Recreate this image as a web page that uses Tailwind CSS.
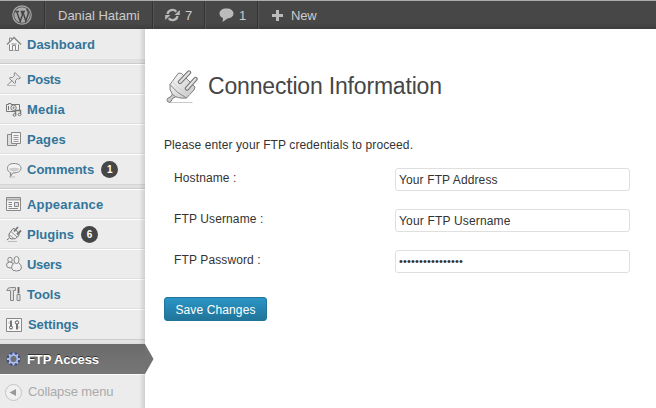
<!DOCTYPE html>
<html lang="en">
<head>
<meta charset="utf-8">
<title>Connection Information</title>
<script src="https://cdn.jsdelivr.net/npm/@tailwindcss/browser@4"></script>
</head>
<body class="h-[408px] w-[656px] overflow-hidden bg-white font-['Liberation_Sans',Arial,sans-serif] text-[#333]">
<header class="flex h-[29px] items-stretch border-t border-[#a9aeaa] bg-linear-to-b from-[#474747] from-80% to-[#3d3d3d] text-[13px] text-[#ccc]">
  <div class="flex w-[45px] items-center border-r border-[#333] pl-3">
    <svg class="size-5" viewBox="0 0 20 20" fill="none" stroke="#aaa"><circle cx="10" cy="10" r="9.200" stroke-width="1.200"/><circle cx="10" cy="10" r="7.800" fill="#a8a8a8" stroke="none"/><path d="M3.200 6.500H7M8.600 6.500H13M4.700 6.500L8.200 16.500L10.500 9.500L9.400 6.500M10.800 6.500L13.800 16L16.300 8.800Q16.500 6 14.900 5Q15 3.500 16 4.500" stroke="#444" stroke-width="1.400"/></svg>
  </div>
  <div class="flex w-[108px] items-center border-r border-l border-r-[#333] border-l-[#555] pt-px pl-3"><span>Danial Hatami</span></div>
  <div class="flex w-[52px] items-center gap-[5px] border-r border-l border-r-[#333] border-l-[#555] pl-[11px]">
    <svg class="h-[14px] w-[15px]" viewBox="0 0 15 14" fill="none" stroke="#b8b8b8" stroke-width="2.300"><path d="M2.500 6A5 5 0 0 1 11.300 3.700M12.500 8A5 5 0 0 1 3.700 10.300"/><path d="M14.800 2V7H9.500ZM.2 12V7H5.500Z" fill="#b8b8b8" stroke="none"/></svg>
    <span class="pt-px">7</span>
  </div>
  <div class="flex w-[53px] items-center gap-[5px] border-r border-l border-r-[#333] border-l-[#555] pl-[13px]">
    <svg class="h-[14px] w-[15px]" viewBox="0 0 15 14" fill="#bbb"><path d="M7.500.5C12 .5 14.500 2.600 14.500 5.500S12 10.300 8.500 10.500L3.500 14L4 10Q.5 8.500 .5 5.500C.5 2.600 3 .5 7.500 .5Z"/></svg>
    <span class="pt-px">1</span>
  </div>
  <div class="flex items-center gap-2 border-l border-[#555] pl-[13px]">
    <svg class="size-[11px]" viewBox="0 0 11 11"><path d="M5.500 0V11M0 5.500H11" stroke="#bbb" stroke-width="3"/></svg>
    <span class="pt-px tracking-[-0.2px]">New</span>
  </div>
</header>
<div class="flex h-[379px]">
  <nav class="relative w-[145px] shrink-0 bg-[#ececec] text-[13px] font-bold text-[#32759b]">
    <a class="flex h-[31px] items-center gap-[5px] border-b border-[#dfdfdf] pl-1.5">
      <svg class="size-4" viewBox="0 0 16 16" fill="#f5f5f5" stroke="#888"><path d="M3.500 7V14.500H12.500V7"/><path d="M1 8.500L8 1.500L15 8.500" stroke-width="1.500"/><path d="M3.500 5V2H5.500V3.500M6.500 14.500V9.500H9.500V14.500M5.500 8H10.500"/></svg><span class="pt-px">Dashboard</span></a>
    <div class="h-1 border-b border-[#ccc] bg-[#e0e0e0]"></div>
    <a class="flex h-[30px] items-center gap-[5px] border-t border-b border-t-white border-b-[#dfdfdf] pl-1.5">
      <svg class="size-4" viewBox="0 0 16 16" fill="#e5e5e5" stroke="#888"><path d="M1 14.500H10" stroke="#bbb"/><path d="M6 9.500L1.500 14M9 1.500L14.500 7L12.500 8L11.500 7.500L9.500 9.500V12L8.500 12.500L3.500 7.500L4 6.500L6.500 6.500L8.500 4.500L8 3Z"/></svg><span class="pt-px tracking-[-0.35px]">Posts</span></a>
    <a class="flex h-[30px] items-center gap-[5px] border-t border-b border-t-white border-b-[#dfdfdf] pl-1.5">
      <svg class="size-4" viewBox="0 0 16 16" fill="#eee" stroke="#777"><path d="M.5 3.500H2.500V2.500H5V3.500H13.500V10.500H.5Z"/><circle cx="7.500" cy="6.800" r="2.700"/><circle cx="7.500" cy="6.800" r=".7"/><path d="M2.500 5V9"/><path d="M9.500 14V9.500H14.500V13.500" stroke-width="1.500"/><ellipse cx="8.500" cy="14" rx="1.500" ry="1.200"/><ellipse cx="13.500" cy="13.500" rx="1.500" ry="1.200"/></svg><span class="pt-px tracking-[0.25px]">Media</span></a>
    <a class="flex h-[30px] items-center gap-[5px] border-t border-b border-t-white border-b-[#dfdfdf] pl-1.5">
      <svg class="size-4" viewBox="0 0 16 16" fill="#ddd" stroke="#888"><path d="M1.500 3.500H10.500V14.500H1.500Z"/><path d="M5.500 1.500H14.500V12.500H5.500Z" fill="#f3f3f3"/><path d="M7.500 4.500H12.500M7.500 6.500H12.500M7.500 8.500H12.500M7.500 10.500H12.500" stroke="#999"/></svg><span class="pt-px tracking-[0.1px]">Pages</span></a>
    <a class="flex h-[30px] items-center gap-[5px] border-t border-t-white pl-1.5">
      <svg class="size-4" viewBox="0 0 16 16" fill="#f3f3f3" stroke="#888"><path d="M3 15H9" stroke="#bbb"/><path d="M8 1.500C12.500 1.500 15 3.500 15 6.200S12.500 10.500 9 10.800L6.500 11L4.500 14.500V10.500C2.500 9.800 1.500 8.500 1.500 6.200C1.500 3.500 3.500 1.500 8 1.500Z"/><path d="M3 6.500Q8 5 13.500 6.500Q12 9.500 8 9.500T3 6.500Z" fill="#ccc" stroke="none"/></svg><span class="pt-px">Comments</span><b class="ml-[2px] flex size-[17px] items-center justify-center rounded-full bg-[#464646] text-[10px] text-white">1</b></a>
    <div class="h-[5px] border-t border-b border-t-[#d5d5d5] border-b-[#ccc] bg-[#e0e0e0]"></div>
    <a class="flex h-[30px] items-center gap-[5px] border-t border-b border-t-white border-b-[#dfdfdf] pl-1.5">
      <svg class="size-4" viewBox="0 0 16 16" fill="#f5f5f5" stroke="#888"><path d="M.5 1.500H14.500V14.500H.5Z"/><path d="M1 3.500H14" stroke-width="2" stroke="#aaa"/><path d="M2.500 6.500H6M2.500 8.500H6M2.500 10.500H6M2.500 12.500H12"/><path d="M8.500 6.500H12.500V10.500H8.500Z" fill="#ddd"/></svg><span class="pt-px tracking-[0.2px]">Appearance</span></a>
    <a class="flex h-[30px] items-center gap-[5px] border-t border-b border-t-white border-b-[#dfdfdf] pl-1.5">
      <svg class="size-4" viewBox="0 0 16 16" fill="#eee" stroke="#777"><path d="M2 15.500H11" stroke="#bbb"/><path d="M3.500 12L.8 14M3 8L7 2.500L9 3L13 7.500V9.500L9.500 12.500L5 13L3 11Z"/><path d="M3 8.500L8.500 13M5 5.500L11 11" stroke="#999"/><path d="M8 5.500L12 1M11 8.500L15 4.500" stroke-width="1.800"/></svg><span class="pt-px">Plugins</span><b class="ml-[2px] flex size-[17px] items-center justify-center rounded-full bg-[#464646] text-[10px] text-white">6</b></a>
    <a class="flex h-[30px] items-center gap-[5px] border-t border-b border-t-white border-b-[#dfdfdf] pl-1.5">
      <svg class="size-4" viewBox="0 0 16 16" fill="#f0f0f0" stroke="#888"><ellipse cx="4" cy="3.800" rx="2.200" ry="2.500"/><ellipse cx="4" cy="9" rx="3.500" ry="3"/><path d="M8.500 6.500Q5.500 9 5.500 12Q6 15 10.500 15T15.500 12Q15.500 9 12.500 6.500Q10.500 8 8.500 6.500Z"/><ellipse cx="10.500" cy="4" rx="2.500" ry="3.500"/></svg><span class="pt-px tracking-[-0.3px]">Users</span></a>
    <a class="flex h-[30px] items-center gap-[5px] border-t border-b border-t-white border-b-[#dfdfdf] pl-1.5">
      <svg class="size-4" viewBox="0 0 16 16" fill="#ddd" stroke="#888"><path d="M.8 4.500Q1.500 1.500 4.500 1.500H9.500V4.500H7.500V14.500H4.500V4.500H3Z"/><path d="M12.500 1V7.500" stroke-width="1.800" stroke="#666"/><path d="M11 8.500H14V14.500H11Z"/></svg><span class="pt-px">Tools</span></a>
    <a class="flex h-[30px] items-center gap-1.5 border-t border-t-white pl-1.5">
      <svg class="size-4" viewBox="0 0 16 16" fill="#f7f7f7" stroke="#888"><path d="M.5 1.500H15.500V14.500H.5Z"/><path d="M5 3.500V9M11 7V12.500" stroke="#555" stroke-width="1.600"/><circle cx="5" cy="10.500" r="1.500" stroke="#555"/><circle cx="11" cy="5.500" r="1.700" stroke="#555"/><path d="M3 4.500V7M13 9V11.500" stroke="#bbb"/></svg><span class="tracking-[-0.1px]">Settings</span></a>
    <div class="h-[5px] border-t border-b border-t-[#ccc] border-b-[#ddd] bg-[#e3e3e3]"></div>
    <div class="pointer-events-none absolute inset-y-0 right-0 w-1.5 bg-linear-to-r from-transparent to-black/12"></div>
    <a class="relative flex h-[30px] items-center gap-[5px] bg-linear-to-b from-[#6a6a6a] to-[#777] pl-1.5 text-white [text-shadow:0_-1px_0_#333]">
      <svg class="size-4" viewBox="0 0 16 16" fill="none"><circle cx="7.500" cy="8" r="5" stroke="#434d70" stroke-width="4"/><g stroke="#a9bbee" stroke-width="2"><circle cx="7.500" cy="8" r="3.900" stroke-width="1.900"/><path d="M7.500 1.500V4M7.500 12V14.500M1 8H3.500M11.500 8H14M2.900 3.400L4.700 5.200M10.300 10.800L12.100 12.600M12.100 3.400L10.300 5.200M4.700 10.800L2.900 12.600"/></g></svg><span class="pt-px tracking-[-0.1px]">FTP Access</span>
      <svg class="absolute top-0 left-[145px] h-[30px] w-[9px]" viewBox="0 0 9 30"><path d="M0 0L8.500 15L0 30Z" fill="#717171"/></svg>
    </a>
    <a class="flex h-[35px] items-center gap-[6px] border-t border-white pl-[5px] font-normal text-[#aaa]">
      <svg class="size-[17px]" viewBox="0 0 17 17"><circle cx="8.500" cy="8.500" r="8" fill="#f0f0f0" stroke="#c4c4c4"/><path d="M11 5V12L4.500 8.500Z" fill="#999"/></svg><span class="tracking-[-0.1px]">Collapse menu</span></a>
  </nav>
  <main class="flex-1 pl-[19px]">
    <div class="mt-[39px] flex h-[36px] items-center gap-[9px]">
      <svg class="mt-[2px] h-[34px] w-[35px]" viewBox="0 0 34 34" fill="none">
        <defs><linearGradient id="metal" x1="0" y1="0" x2="1" y2="1"><stop offset="0" stop-color="#fcfcfc"/><stop offset="1" stop-color="#c4c4c4"/></linearGradient></defs>
        <path d="M5 32.500H28" stroke="#bbb" stroke-width=".8"/>
        <path d="M8 24L6.500 26.500L3 28.500C1.500 31 4 33.500 6.500 31.500L8 28.500L11 27" fill="#ccc" stroke="#777"/>
        <path d="M5.500 14.500L14 3L17 3.500L30.500 17L29.500 20L22 28Q13 29 8 24.500Q4.500 20 5.500 14.500Z" fill="url(#metal)" stroke="#808080" stroke-linejoin="round"/>
        <path d="M5.500 14.500Q12 23 22 28" stroke="#888"/>
        <path d="M8 11.500Q14 20 25 24.500" stroke="#d2d2d2"/>
        <path d="M15.500 12L24.500 2.500M22.500 18.500L31 9" stroke="#777" stroke-width="4.400" stroke-linecap="round"/>
        <path d="M15.500 12L24.500 2.500M22.500 18.500L31 9" stroke="#e2e2e2" stroke-width="2.200" stroke-linecap="round"/>
      </svg>
      <h1 class="text-[23px] leading-[30px] tracking-[-0.18px] text-[#464646]">Connection Information</h1>
    </div>
    <p class="mt-8 text-[12px] leading-[18px] tracking-[0.1px]">Please enter your FTP credentials to proceed.</p>
    <form class="mt-[14px] flex flex-col text-[12px] tracking-[0.12px]">
      <div class="flex h-[41px]"><label class="w-[231px] pt-0.5 pl-[10px] leading-[16px]">Hostname :</label><div class="flex h-[23px] w-[235px] items-center rounded-[3px] border border-[#dfdfdf] pl-[3px]">Your FTP Address</div></div>
      <div class="flex h-[41px]"><label class="w-[231px] pt-0.5 pl-[10px] leading-[16px]">FTP Username :</label><div class="flex h-[23px] w-[235px] items-center rounded-[3px] border border-[#dfdfdf] pl-[3px] tracking-[0.17px]">Your FTP Username</div></div>
      <div class="flex h-[41px]"><label class="w-[231px] pt-0.5 pl-[10px] leading-[16px]">FTP Password :</label><div class="flex h-[23px] w-[235px] items-center rounded-[3px] border border-[#dfdfdf] pl-[3px]"><span class="text-[11px] tracking-[0.15px]">••••••••••••••••</span></div></div>
      <button type="button" class="mt-[6px] h-6 w-[103px] rounded-[3px] border border-[#21759b] bg-linear-to-b from-[#2a95c5] to-[#21759b] pt-px text-[12px] text-white">Save Changes</button>
    </form>
  </main>
</div>
</body>
</html>
